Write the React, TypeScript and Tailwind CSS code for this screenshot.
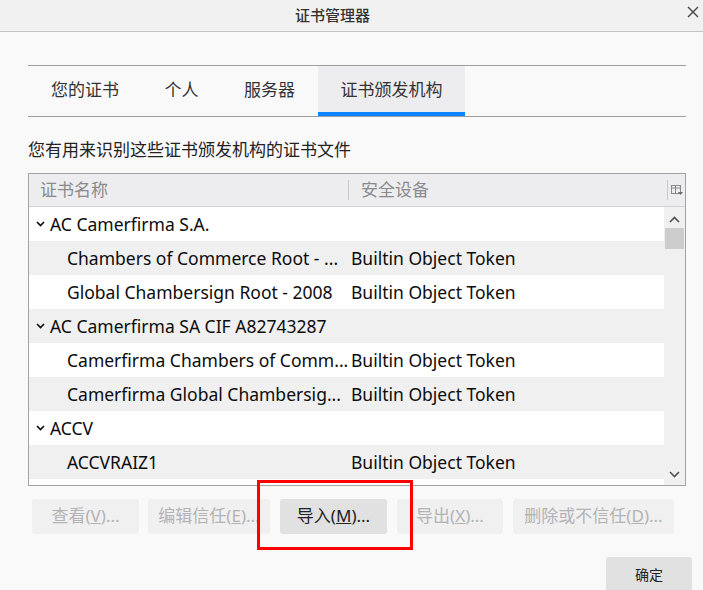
import React from "react";

const FONT = { fontFamily: '"Noto Sans", "Noto Sans CJK SC", sans-serif' };

function Chevron() {
  return (
    <svg width="9" height="6" viewBox="0 0 9 6" className="shrink-0">
      <polyline points="1,1 4.5,4.5 8,1" fill="none" stroke="#0c0c0d" strokeWidth="1.6" />
    </svg>
  );
}

type Row = { group?: boolean; name: string; token?: string };

const rows: Row[] = [
  { group: true, name: "AC Camerfirma S.A." },
  { name: "Chambers of Commerce Root - ...", token: "Builtin Object Token" },
  { name: "Global Chambersign Root - 2008", token: "Builtin Object Token" },
  { group: true, name: "AC Camerfirma SA CIF A82743287" },
  { name: "Camerfirma Chambers of Comm...", token: "Builtin Object Token" },
  { name: "Camerfirma Global Chambersig...", token: "Builtin Object Token" },
  { group: true, name: "ACCV" },
  { name: "ACCVRAIZ1", token: "Builtin Object Token" },
];

function Btn({ w, label, mn, rest, enabled }: { w: string; label: string; mn: string; rest: string; enabled?: boolean }) {
  return (
    <div
      className={
        "h-[35px] rounded-[3px] flex items-center justify-center text-[17px] whitespace-nowrap pb-[1px] " +
        w +
        (enabled ? " bg-[#e1e1e2] text-[#222]" : " bg-[#f0f0f1] text-[#b3b3b5]")
      }
    >
      {label}(<span className="underline">{mn}</span>){rest}
    </div>
  );
}

export default function App() {
  return (
    <div className="relative w-[703px] h-[590px] overflow-hidden bg-[#f9f9fa] text-[#0c0c0d]" style={FONT}>
      {/* title bar */}
      <div className="relative h-[32px] bg-[#f1f1f1] border-b border-[#c4c4c4] flex items-center justify-center pr-[38px]">
        <span className="text-[15px] font-medium text-[#333]">证书管理器</span>
        <svg className="absolute right-[4px] top-[6px]" width="12" height="12" viewBox="0 0 12 12">
          <path d="M1 1 L11 11 M11 1 L1 11" stroke="#444" strokeWidth="1.4" />
        </svg>
      </div>

      <div className="pl-[28px] pr-[17px]">
        {/* tabs */}
        <div className="mt-[33px] h-[52px] border-t border-b border-[#9e9e9e] flex text-[17px] text-[#333]">
          {["您的证书", "个人", "服务器", "证书颁发机构"].map((t, i) => (
            <div
              key={t}
              className={
                "relative h-full flex items-center pl-[23px] pr-[22.5px] pb-[2px] " + (i === 3 ? "bg-[#ededf0]" : "")
              }
            >
              {t}
              {i === 3 && <div className="absolute left-0 right-0 bottom-0 h-[4px] bg-[#0a84ff]" />}
            </div>
          ))}
        </div>

        {/* description */}
        <div className="mt-[20px] text-[17px] leading-[26px] text-[#222]">您有用来识别这些证书颁发机构的证书文件</div>

        {/* tree */}
        <div className="mt-[10px] h-[313px] border border-[#a3a3a3] bg-white flex flex-col">
          <div className="h-[33px] bg-[#ededf0] border-b border-[#d2d2d4] flex items-center text-[17px] text-[#8a8a8c] shrink-0">
            <div className="w-[319px] pl-[11px]">证书名称</div>
            <div className="w-px h-[20px] bg-[#c8c8c8]" />
            <div className="flex-1 pl-[12px]">安全设备</div>
            <div className="w-px h-[20px] bg-[#c8c8c8]" />
            <div className="w-[17px] flex items-center justify-center">
              <svg width="12" height="11" viewBox="0 0 12 11">
                <rect x="0.5" y="0.5" width="9" height="8" fill="none" stroke="#8a8a8c" />
                <line x1="0.5" y1="3" x2="9.5" y2="3" stroke="#8a8a8c" />
                <line x1="4.5" y1="0.5" x2="4.5" y2="8.5" stroke="#8a8a8c" />
                <path d="M7 7 L12 7 L9.5 10 Z" fill="#6a6a6c" />
              </svg>
            </div>
          </div>
          <div className="flex flex-1 min-h-0">
            <div className="flex-1 flex flex-col">
              {rows.map((r, i) => (
                <div
                  key={i}
                  className={
                    "h-[34px] shrink-0 flex items-center text-[17.5px] whitespace-nowrap overflow-hidden " +
                    (i % 2 === 1 ? "bg-[#f0f0f0]" : "bg-white")
                  }
                >
                  {r.group ? (
                    <div className="flex items-center pl-[7px] gap-[5px]">
                      <Chevron />
                      <span>{r.name}</span>
                    </div>
                  ) : (
                    <>
                      <div className="w-[322px] pl-[38px] overflow-hidden">{r.name}</div>
                      <div>{r.token}</div>
                    </>
                  )}
                </div>
              ))}
            </div>
            <div className="w-[21px] bg-[#f0f0f0] flex flex-col items-center">
              <svg className="mt-[9px]" width="11" height="7" viewBox="0 0 11 7">
                <polyline points="1,6 5.5,1.5 10,6" fill="none" stroke="#505050" strokeWidth="1.6" />
              </svg>
              <div className="mt-[5px] w-[19px] h-[21px] bg-[#cdcdcd]" />
              <div className="flex-1" />
              <svg className="mb-[7px]" width="11" height="7" viewBox="0 0 11 7">
                <polyline points="1,1 5.5,5.5 10,1" fill="none" stroke="#505050" strokeWidth="1.6" />
              </svg>
            </div>
          </div>
        </div>

        {/* buttons */}
        <div className="mt-[13px] ml-[4px] flex">
          <Btn w="w-[107px] mr-[9px]" label="查看" mn="V" rest="..." />
          <Btn w="w-[122px] mr-[10px]" label="编辑信任" mn="E" rest="..." />
          <Btn w="w-[107px] mr-[10px]" label="导入" mn="M" rest="..." enabled />
          <Btn w="w-[106px] mr-[10px]" label="导出" mn="X" rest="..." />
          <Btn w="w-[161px]" label="删除或不信任" mn="D" rest="..." />
        </div>
      </div>

      {/* OK button */}
      <div className="mt-[23px] flex justify-end pr-[11px]">
        <div className="w-[86px] h-[36px] rounded-[3px] bg-[#e1e1e2] flex items-center justify-center text-[14px] text-[#222] pb-[2px]">
          确定
        </div>
      </div>

      {/* annotation */}
      <div className="absolute left-[257px] top-[480px] w-[156px] h-[70px] border-[3px] border-[#ff0000]" />
    </div>
  );
}
